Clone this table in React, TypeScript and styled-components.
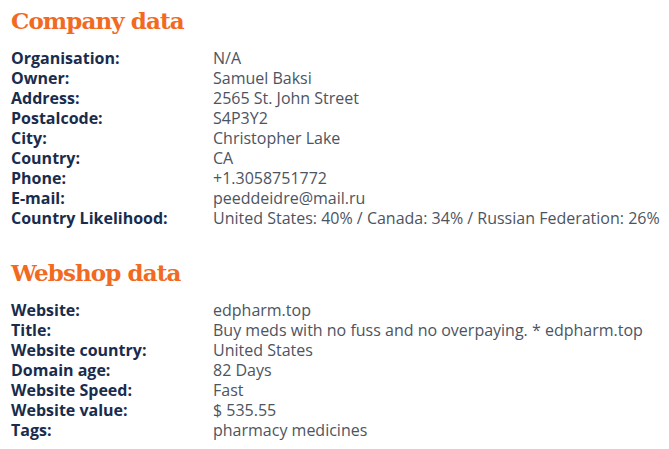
import React from "react";
import styled, { createGlobalStyle } from "styled-components";

const Global = createGlobalStyle`
  html, body { margin: 0; padding: 0; background: #ffffff; }
  body { font-family: "Open Sans", sans-serif; }
`;

const Page = styled.div`
  padding: 5px 11px 0 11px;
  display: flex;
  flex-direction: column;
`;

const Section = styled.section<{ $gap: number }>`
  margin-bottom: ${(p) => p.$gap}px;
`;

const Heading = styled.h2`
  margin: 0 0 11px 0;
  font-family: "DejaVu Serif", serif;
  font-weight: bold;
  font-size: 23px;
  line-height: 32px;
  color: #f26a21;
  letter-spacing: -0.9px;
`;

const Table = styled.div`
  display: grid;
  grid-template-columns: 202px 1fr;
`;

const Label = styled.div`
  font-family: "Open Sans", sans-serif;
  font-weight: 700;
  font-size: 16px;
  line-height: 20px;
  color: #1a2c4c;
  white-space: nowrap;
`;

const Value = styled.div`
  font-family: "Open Sans", sans-serif;
  font-weight: 400;
  font-size: 16px;
  line-height: 20px;
  color: #4d5461;
  white-space: nowrap;
`;

type Row = [string, string];

const company: Row[] = [
  ["Organisation:", "N/A"],
  ["Owner:", "Samuel Baksi"],
  ["Address:", "2565 St. John Street"],
  ["Postalcode:", "S4P3Y2"],
  ["City:", "Christopher Lake"],
  ["Country:", "CA"],
  ["Phone:", "+1.3058751772"],
  ["E-mail:", "peeddeidre@mail.ru"],
  ["Country Likelihood:", "United States: 40% / Canada: 34% / Russian Federation: 26%"],
];

const webshop: Row[] = [
  ["Website:", "edpharm.top"],
  ["Title:", "Buy meds with no fuss and no overpaying. * edpharm.top"],
  ["Website country:", "United States"],
  ["Domain age:", "82 Days"],
  ["Website Speed:", "Fast"],
  ["Website value:", "$ 535.55"],
  ["Tags:", "pharmacy medicines"],
];

const DataTable = ({ rows }: { rows: Row[] }) => (
  <Table>
    {rows.map(([k, v]) => (
      <React.Fragment key={k}>
        <Label>{k}</Label>
        <Value>{v}</Value>
      </React.Fragment>
    ))}
  </Table>
);

export default function App() {
  return (
    <>
      <Global />
      <Page>
        <Section $gap={29}>
          <Heading>Company data</Heading>
          <DataTable rows={company} />
        </Section>
        <Section $gap={0}>
          <Heading>Webshop data</Heading>
          <DataTable rows={webshop} />
        </Section>
      </Page>
    </>
  );
}
